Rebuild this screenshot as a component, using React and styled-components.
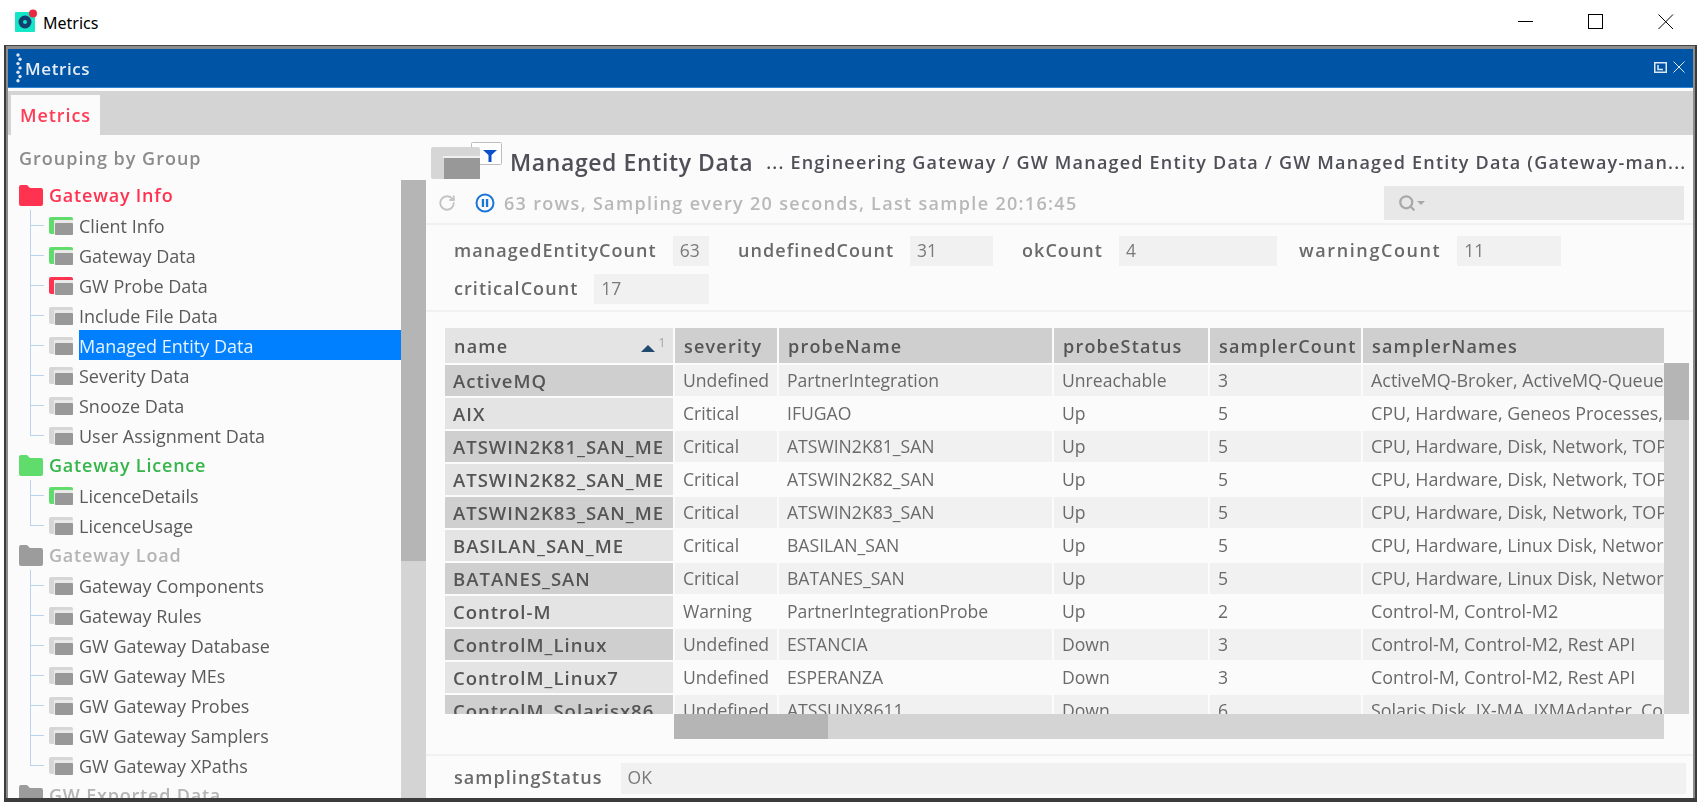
import styled, { createGlobalStyle } from 'styled-components';
import { RotateCw, Search } from 'lucide-react';

const GlobalStyle = createGlobalStyle`
  html, body {
    margin: 0;
    padding: 0;
    background: #fff;
    font-family: "Open Sans", "Liberation Sans", sans-serif;
  }
`;

const tree = [
  {
    name: 'Gateway Info',
    color: '#ff3350',
    folder: '#ff3350',
    items: [
      { name: 'Client Info', state: 'ok' },
      { name: 'Gateway Data', state: 'ok' },
      { name: 'GW Probe Data', state: 'bad' },
      { name: 'Include File Data' },
      { name: 'Managed Entity Data', selected: true },
      { name: 'Severity Data' },
      { name: 'Snooze Data' },
      { name: 'User Assignment Data' },
    ],
  },
  {
    name: 'Gateway Licence',
    color: '#35b54a',
    folder: '#5fdc6b',
    items: [{ name: 'LicenceDetails', state: 'ok' }, { name: 'LicenceUsage' }],
  },
  {
    name: 'Gateway Load',
    color: '#b4b4b4',
    folder: '#9c9c9c',
    items: [
      { name: 'Gateway Components' },
      { name: 'Gateway Rules' },
      { name: 'GW Gateway Database' },
      { name: 'GW Gateway MEs' },
      { name: 'GW Gateway Probes' },
      { name: 'GW Gateway Samplers' },
      { name: 'GW Gateway XPaths' },
    ],
  },
  { name: 'GW Exported Data', color: '#b4b4b4', folder: '#9c9c9c', items: [] },
];

const fields = [
  { label: 'managedEntityCount', value: '63' },
  { label: 'undefinedCount', value: '31' },
  { label: 'okCount', value: '4' },
  { label: 'warningCount', value: '11' },
  { label: 'criticalCount', value: '17' },
];

const columns = ['severity', 'probeName', 'probeStatus', 'samplerCount', 'samplerNames'];

const rows = [
  ['ActiveMQ', 'Undefined', 'PartnerIntegration', 'Unreachable', '3', 'ActiveMQ-Broker, ActiveMQ-Queue, ActiveMQ-Topic'],
  ['AIX', 'Critical', 'IFUGAO', 'Up', '5', 'CPU, Hardware, Geneos Processes, Network'],
  ['ATSWIN2K81_SAN_ME', 'Critical', 'ATSWIN2K81_SAN', 'Up', '5', 'CPU, Hardware, Disk, Network, TOP'],
  ['ATSWIN2K82_SAN_ME', 'Critical', 'ATSWIN2K82_SAN', 'Up', '5', 'CPU, Hardware, Disk, Network, TOP'],
  ['ATSWIN2K83_SAN_ME', 'Critical', 'ATSWIN2K83_SAN', 'Up', '5', 'CPU, Hardware, Disk, Network, TOP'],
  ['BASILAN_SAN_ME', 'Critical', 'BASILAN_SAN', 'Up', '5', 'CPU, Hardware, Linux Disk, Network, TOP'],
  ['BATANES_SAN', 'Critical', 'BATANES_SAN', 'Up', '5', 'CPU, Hardware, Linux Disk, Network, TOP'],
  ['Control-M', 'Warning', 'PartnerIntegrationProbe', 'Up', '2', 'Control-M, Control-M2'],
  ['ControlM_Linux', 'Undefined', 'ESTANCIA', 'Down', '3', 'Control-M, Control-M2, Rest API'],
  ['ControlM_Linux7', 'Undefined', 'ESPERANZA', 'Down', '3', 'Control-M, Control-M2, Rest API'],
  ['ControlM_Solarisx86', 'Undefined', 'ATSSUNX8611', 'Down', '6', 'Solaris Disk, IX-MA, IXMAdapter, Control-M'],
];

const stateColors = { ok: '#5fdc6b', bad: '#ff3350' };

function AppLogo() {
  return (
    <LogoSvg width="24" height="24" viewBox="0 0 24 24">
      <rect x="0" y="3" width="20" height="20" rx="1" fill="#14e6c8" />
      <circle cx="10" cy="13" r="6.5" fill="#123f6e" />
      <circle cx="10" cy="13" r="2" fill="#14e6c8" />
      <circle cx="18" cy="4.5" r="4" fill="#e8293f" />
    </LogoSvg>
  );
}

function DragDots() {
  const dots = [0, 1, 2, 3, 4, 5, 6];
  return (
    <svg width="6" height="30" viewBox="0 0 6 30">
      {dots.map((d) => (
        <circle key={d} cx={d % 2 ? 4 : 2} cy={2 + d * 4.3} r="1.7" fill="#dfe9f5" />
      ))}
    </svg>
  );
}

function FolderIcon({ color }) {
  return (
    <svg width="24" height="21" viewBox="0 0 24 21">
      <path d="M0 2a2 2 0 0 1 2-2h6l3 3h11a2 2 0 0 1 2 2v14a2 2 0 0 1-2 2H2a2 2 0 0 1-2-2z" fill={color} />
    </svg>
  );
}

function ItemIcon({ state }) {
  return (
    <ItemSvg width="24" height="18" viewBox="0 0 24 18">
      <rect x="0" y="0" width="24" height="17" rx="2" fill={stateColors[state] || '#d6d6d6'} />
      <rect x="5" y="3" width="19" height="15" fill="#e9e9e9" />
      <rect x="6" y="6" width="18" height="12" rx="1" fill="#989898" />
    </ItemSvg>
  );
}

function EntityIcon() {
  return (
    <svg width="72" height="38" viewBox="0 0 72 38">
      <rect x="40.5" y="0.5" width="30" height="22" rx="1" fill="#fff" stroke="#bdbdbd" />
      <path d="M52 8h14l-5.5 5v7h-3v-7z" fill="#0b50c8" />
      <rect x="0" y="5" width="49" height="32" rx="2" fill="#d6d6d6" />
      <rect x="12" y="14" width="37" height="2" fill="#f0f0f0" />
      <rect x="13" y="16" width="36" height="21" fill="#989898" />
    </svg>
  );
}

function PauseIcon() {
  return (
    <svg width="20" height="20" viewBox="0 0 20 20">
      <circle cx="10" cy="10" r="8.5" fill="none" stroke="#1a76d8" strokeWidth="2" />
      <rect x="6.8" y="6" width="2.3" height="8" fill="#1a76d8" />
      <rect x="10.9" y="6" width="2.3" height="8" fill="#1a76d8" />
    </svg>
  );
}

function WinMin() {
  return (
    <svg width="16" height="16" viewBox="0 0 16 16">
      <path d="M0 7.5h15" stroke="#000" />
    </svg>
  );
}

function WinMax() {
  return (
    <svg width="16" height="16" viewBox="0 0 16 16">
      <rect x="0.5" y="0.5" width="14" height="14" fill="none" stroke="#000" />
    </svg>
  );
}

function WinClose() {
  return (
    <svg width="16" height="16" viewBox="0 0 16 16">
      <path d="M0.5 0.5l14.5 14.5M15 0.5L0.5 15" stroke="#000" />
    </svg>
  );
}

function PopOutIcon() {
  return (
    <svg width="13" height="11" viewBox="0 0 13 11">
      <rect x="0.75" y="0.75" width="11.5" height="9.5" fill="none" stroke="#dfe9f5" strokeWidth="1.5" />
      <path d="M4 3v4.5h5" fill="none" stroke="#dfe9f5" strokeWidth="1.5" />
    </svg>
  );
}

function PanelClose() {
  return (
    <svg width="12" height="12" viewBox="0 0 12 12">
      <path d="M0.5 0.5l11 11M11.5 0.5l-11 11" stroke="#dfe9f5" strokeWidth="1" />
    </svg>
  );
}

export default function App() {
  return (
    <Screen>
      <GlobalStyle />
      <TitleBar>
        <AppTitle>
          <AppLogo />
          <span>Metrics</span>
        </AppTitle>
        <WinControls>
          <WinMin />
          <WinMax />
          <WinClose />
        </WinControls>
      </TitleBar>
      <Frame>
        <Window>
          <BlueBar>
            <BlueTitle>
              <DragDots />
              <span>Metrics</span>
            </BlueTitle>
            <BlueActions>
              <PopOutIcon />
              <PanelClose />
            </BlueActions>
          </BlueBar>
          <TabStrip>
            <Tab>Metrics</Tab>
          </TabStrip>
          <Body>
            <LeftPane>
              <TreeCol>
                <Grouping>Grouping by Group</Grouping>
                {tree.map((group) => (
                  <div key={group.name}>
                    <GroupRow $color={group.color}>
                      <FolderIcon color={group.folder} />
                      <span>{group.name}</span>
                    </GroupRow>
                    {group.items.map((item, i) => (
                      <TreeItem key={item.name} $last={i === group.items.length - 1}>
                        <ItemIcon state={item.state} />
                        <ItemLabel $selected={item.selected}>{item.name}</ItemLabel>
                      </TreeItem>
                    ))}
                  </div>
                ))}
              </TreeCol>
              <TreeScroll>
                <TreeThumb />
              </TreeScroll>
            </LeftPane>
            <RightPane>
              <Header>
                <EntityIcon />
                <HeaderTitle>Managed Entity Data</HeaderTitle>
                <Breadcrumb>... Engineering Gateway / GW Managed Entity Data / GW Managed Entity Data (Gateway-man...</Breadcrumb>
              </Header>
              <StatusRow>
                <RotateCw size={18} color="#c4c4c4" strokeWidth={2.5} />
                <PauseSlot>
                  <PauseIcon />
                </PauseSlot>
                <StatusText>63 rows, Sampling every 20 seconds, Last sample 20:16:45</StatusText>
                <SearchBox>
                  <Search size={18} color="#a8a8a8" strokeWidth={3} />
                  <SearchCaret />
                </SearchBox>
              </StatusRow>
              <Fields>
                {fields.map((f) => (
                  <Field key={f.label}>
                    <FieldLabel>{f.label}</FieldLabel>
                    <FieldValue>{f.value}</FieldValue>
                  </Field>
                ))}
              </Fields>
              <TableArea>
                <TableRow>
                  <TableClip>
                    <HeadRow>
                      <HeadCell $first>
                        <span>name</span>
                        <SortMark>
                          <SortArrow />
                          <SortIndex>1</SortIndex>
                        </SortMark>
                      </HeadCell>
                      {columns.map((c) => (
                        <HeadCell key={c}>{c}</HeadCell>
                      ))}
                    </HeadRow>
                    {rows.map((row, r) => (
                      <DataRow key={row[0]}>
                        {row.map((cell, c) =>
                          c === 0 ? (
                            <NameCell key={c} $odd={r % 2 === 0}>{cell}</NameCell>
                          ) : (
                            <DataCell key={c} $odd={r % 2 === 0} $size={c === 5 ? 17.9 : 17.6}>{cell}</DataCell>
                          )
                        )}
                      </DataRow>
                    ))}
                  </TableClip>
                  <VScroll>
                    <VThumb />
                  </VScroll>
                </TableRow>
                <HScroll>
                  <HThumb />
                </HScroll>
              </TableArea>
              <Footer>
                <FieldLabel>samplingStatus</FieldLabel>
                <FooterValue>OK</FooterValue>
              </Footer>
            </RightPane>
          </Body>
        </Window>
      </Frame>
    </Screen>
  );
}

const Screen = styled.div`
  width: 1697px;
  height: 802px;
  overflow: hidden;
  display: flex;
  flex-direction: column;
`;

const TitleBar = styled.div`
  height: 45px;
  flex: none;
  display: flex;
  align-items: center;
  justify-content: space-between;
  padding: 0 23px 0 15px;
  background: #fff;
`;

const LogoSvg = styled.svg`
  margin-bottom: 4px;
`;

const AppTitle = styled.div`
  display: flex;
  align-items: center;
  gap: 4px;
  font-size: 16px;
  color: #000;
  font-family: "Noto Sans", "Liberation Sans", sans-serif;
`;

const WinControls = styled.div`
  display: flex;
  align-items: center;
  gap: 54px;
  margin-bottom: 2px;
`;

const Frame = styled.div`
  flex: 1;
  min-height: 0;
  margin-left: 4px;
  background: #8c8c8c;
  border-top: 1px solid #444;
  border-left: 2px solid #3c3c3c;
  border-bottom: 4px solid #3c3c3c;
  border-right: 2px solid #3c3c3c;
  padding: 3px 2px 0 2px;
  display: flex;
`;

const Window = styled.div`
  flex: 1;
  min-width: 0;
  display: flex;
  flex-direction: column;
  background: #fbfbfb;
  filter: blur(0.35px);
`;

const BlueBar = styled.div`
  height: 38px;
  flex: none;
  display: flex;
  align-items: center;
  justify-content: space-between;
  padding: 0 8px 0 8px;
  background: #0054a6;
  border-bottom: 1px solid #2f86d0;
`;

const BlueTitle = styled.div`
  display: flex;
  align-items: center;
  gap: 3px;
  color: #e4edf7;
  font-size: 17px;
  font-weight: 600;
  letter-spacing: 0.6px;
`;

const BlueActions = styled.div`
  display: flex;
  align-items: center;
  gap: 6px;
  margin-bottom: 2px;
`;

const TabStrip = styled.div`
  height: 44px;
  flex: none;
  margin-top: 3px;
  padding: 4px 0 0 3px;
  box-sizing: border-box;
  background: #d4d4d4;
  display: flex;
`;

const Tab = styled.div`
  width: 89px;
  display: flex;
  align-items: center;
  justify-content: center;
  background: #fbfbfb;
  color: #ff3b55;
  font-size: 18px;
  font-weight: 600;
  letter-spacing: 0.9px;
`;

const Body = styled.div`
  flex: 1;
  min-height: 0;
  display: flex;
`;

const LeftPane = styled.div`
  width: 418px;
  flex: none;
  display: flex;
  overflow: hidden;
`;

const TreeCol = styled.div`
  flex: 1;
  min-width: 0;
  padding-left: 11px;
`;

const Grouping = styled.div`
  height: 45px;
  display: flex;
  align-items: center;
  color: #8b8b8b;
  font-size: 18px;
  font-weight: 600;
  letter-spacing: 1px;
`;

const GroupRow = styled.div`
  height: 30px;
  display: flex;
  align-items: center;
  gap: 6px;
  color: ${(p) => p.$color};
  font-size: 18px;
  font-weight: 600;
  letter-spacing: 0.8px;
`;

const TreeItem = styled.div`
  position: relative;
  height: 30px;
  display: flex;
  align-items: center;
  gap: 6px;
  padding-left: 30px;
  color: #5a5a5a;
  font-size: 18px;

  /* tree connector lines */
  &::before {
    content: '';
    position: absolute;
    left: 11px;
    top: 0;
    bottom: ${(p) => (p.$last ? '15px' : '0')};
    width: 1px;
    background: #b9d3ec;
  }

  &::after {
    content: '';
    position: absolute;
    left: 11px;
    top: 15px;
    width: 14px;
    height: 1px;
    background: #b9d3ec;
  }
`;

const ItemSvg = styled.svg`
  margin-top: 1px;
`;

const ItemLabel = styled.div`
  flex: 1;
  height: 30px;
  line-height: 32px;
  background: ${(p) => (p.$selected ? '#0080ff' : 'transparent')};
  color: ${(p) => (p.$selected ? '#e6f2ff' : 'inherit')};
`;

const TreeScroll = styled.div`
  width: 25px;
  flex: none;
  margin-top: 45px;
  background: #d4d4d4;
`;

const TreeThumb = styled.div`
  height: 381px;
  background: #b5b5b5;
`;

const RightPane = styled.div`
  flex: 1;
  min-width: 0;
  display: flex;
  flex-direction: column;
`;

const Header = styled.div`
  height: 45px;
  flex: none;
  display: flex;
  align-items: center;
  padding: 6px 0 0 5px;
  box-sizing: border-box;
  color: #4f4f57;
  white-space: nowrap;
`;

const HeaderTitle = styled.div`
  margin-left: 7px;
  padding-top: 2px;
  font-size: 23px;
  font-weight: 600;
  letter-spacing: 0.6px;
`;

const Breadcrumb = styled.div`
  margin-left: 13px;
  padding-top: 2px;
  font-size: 18px;
  font-weight: 600;
  letter-spacing: 1.2px;
`;

const StatusRow = styled.div`
  height: 45px;
  flex: none;
  display: flex;
  align-items: center;
  padding: 3px 9px 0 12px;
  box-sizing: border-box;
  border-bottom: 2px solid #f1f1f1;
`;

const PauseSlot = styled.div`
  display: flex;
  margin-left: 19px;
`;

const StatusText = styled.div`
  flex: 1;
  margin-left: 9px;
  color: #b8b8b8;
  font-size: 18px;
  font-weight: 600;
  letter-spacing: 1.32px;
`;

const SearchBox = styled.div`
  width: 300px;
  height: 34px;
  display: flex;
  align-items: center;
  gap: 1px;
  padding-left: 14px;
  box-sizing: border-box;
  background: #e8e8e8;
`;

const SearchCaret = styled.div`
  width: 0;
  height: 0;
  border-left: 4px solid transparent;
  border-right: 4px solid transparent;
  border-top: 4px solid #a8a8a8;
`;

const Fields = styled.div`
  flex: none;
  display: flex;
  flex-wrap: wrap;
  gap: 8px 29px;
  padding: 11px 20px 6px 28px;
  border-bottom: 2px solid #f1f1f1;
`;

const FieldLabel = styled.div`
  flex: none;
  margin-bottom: 2px;
  color: #6a6a6a;
  font-size: 18px;
  font-weight: 600;
  letter-spacing: 1.05px;
`;

const Field = styled.div`
  width: 255px;
  height: 30px;
  display: flex;
  align-items: center;
  gap: 16px;

  &:nth-child(4) {
    width: 262px;
    margin-left: -7px;

    ${FieldLabel} {
      letter-spacing: 1.6px;
    }
  }
`;

const FieldValue = styled.div`
  flex: 1;
  height: 30px;
  line-height: 28px;
  padding-left: 7px;
  background: #f1f1f1;
  color: #7a7a7a;
  font-size: 17.5px;
`;

const TableArea = styled.div`
  flex: 1;
  min-height: 0;
  padding: 16px 4px 0 19px;
  border-bottom: 2px solid #f1f1f1;
`;

const TableRow = styled.div`
  display: flex;
  height: 386px;
`;

const TableClip = styled.div`
  width: 1219px;
  flex: none;
  overflow: hidden;
`;

const gridColumns = '228px 102px 273px 154px 151px 301px';

const HeadRow = styled.div`
  display: grid;
  grid-template-columns: ${gridColumns};
  column-gap: 2px;
  height: 35px;
  margin-bottom: 2px;
`;

const HeadCell = styled.div`
  display: flex;
  align-items: center;
  justify-content: space-between;
  padding: 0 6px 0 9px;
  background: ${(p) => (p.$first ? '#e4e4e4' : '#cfcfcf')};
  color: #555;
  font-size: 18px;
  font-weight: 600;
  letter-spacing: 1.2px;
  white-space: nowrap;
  overflow: hidden;
`;

const SortMark = styled.div`
  display: flex;
  align-items: flex-start;
  gap: 3px;
`;

const SortArrow = styled.div`
  width: 0;
  height: 0;
  margin-top: 6px;
  border-left: 7px solid transparent;
  border-right: 7px solid transparent;
  border-bottom: 7px solid #1f4a6e;
`;

const SortIndex = styled.span`
  color: #a8a8a8;
  font-size: 13px;
  font-weight: 400;
  line-height: 1;
  margin-top: -3px;
`;

const DataRow = styled.div`
  display: grid;
  grid-template-columns: ${gridColumns};
  column-gap: 2px;
  height: 31px;
  margin-bottom: 2px;
`;

const NameCell = styled.div`
  padding-left: 8px;
  line-height: 31px;
  background: ${(p) => (p.$odd ? '#cfcfcf' : '#e4e4e4')};
  color: #555;
  font-size: 18.5px;
  font-weight: 600;
  letter-spacing: 1px;
  white-space: nowrap;
  overflow: hidden;
`;

const DataCell = styled.div`
  padding-left: 8px;
  line-height: 31px;
  background: ${(p) => (p.$odd ? '#f1f1f1' : '#fbfbfb')};
  color: #6a6a6a;
  font-size: ${(p) => p.$size}px;
  white-space: nowrap;
  overflow: hidden;
`;

const VScroll = styled.div`
  width: 25px;
  flex: none;
  margin-top: 35px;
  background: #d4d4d4;
`;

const VThumb = styled.div`
  height: 57px;
  background: #b5b5b5;
`;

const HScroll = styled.div`
  width: 990px;
  height: 25px;
  margin-left: 229px;
  background: #d4d4d4;
`;

const HThumb = styled.div`
  width: 154px;
  height: 25px;
  background: #b5b5b5;
`;

const Footer = styled.div`
  height: 42px;
  flex: none;
  display: flex;
  align-items: center;
  gap: 18px;
  padding: 2px 7px 0 28px;
  box-sizing: border-box;
`;

const FooterValue = styled.div`
  flex: 1;
  height: 31px;
  line-height: 29px;
  padding-left: 7px;
  background: #f1f1f1;
  color: #7a7a7a;
  font-size: 17.5px;
`;
